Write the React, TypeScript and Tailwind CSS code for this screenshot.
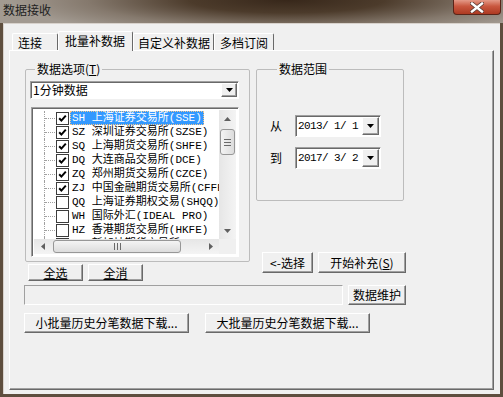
import React from "react";

const ui = "font-['Noto_Sans_CJK_SC',sans-serif] text-[12px] leading-[14px] text-black";
const raised =
  "bg-[#f0f0f0] border border-t-white border-l-white border-r-[#696969] border-b-[#696969] shadow-[inset_-1px_-1px_0_#a0a0a0]";
const sunken =
  "bg-white border border-t-[#a0a0a0] border-l-[#a0a0a0] border-r-white border-b-white shadow-[inset_1px_1px_0_#696969]";

const exchanges = [
  { code: "SH", name: "上海证券交易所(SSE)", on: true },
  { code: "SZ", name: "深圳证券交易所(SZSE)", on: true },
  { code: "SQ", name: "上海期货交易所(SHFE)", on: true },
  { code: "DQ", name: "大连商品交易所(DCE)", on: true },
  { code: "ZQ", name: "郑州期货交易所(CZCE)", on: true },
  { code: "ZJ", name: "中国金融期货交易所(CFFEX)", on: true },
  { code: "QQ", name: "上海证券期权交易(SHQQ)", on: false },
  { code: "WH", name: "国际外汇(IDEAL PRO)", on: false },
  { code: "HZ", name: "香港期货交易所(HKFE)", on: false },
  { code: "NQ", name: "新加坡期货交易所(SGX)", on: false },
];

const DropArrow = ({ fill = "#000" }: { fill?: string }) => (
  <svg width="7" height="4" viewBox="0 0 7 4">
    <path d="M0 0h7L3.5 4z" fill={fill} />
  </svg>
);

const Check = ({ on }: { on: boolean }) => (
  <div className="w-[13px] h-[13px] shrink-0 bg-white border border-[#3c3c3c] flex items-center justify-center">
    {on && (
      <svg width="9" height="9" viewBox="0 0 9 9">
        <polyline points="1.2,4.2 3.4,6.6 7.8,1.6" fill="none" stroke="#000" strokeWidth="2" />
      </svg>
    )}
  </div>
);

const Grip = ({ vertical }: { vertical: boolean }) =>
  vertical ? (
    <div className="flex flex-col gap-[2px]">
      <div className="w-[7px] h-px bg-[#6a6a6a]" />
      <div className="w-[7px] h-px bg-[#6a6a6a]" />
      <div className="w-[7px] h-px bg-[#6a6a6a]" />
    </div>
  ) : (
    <div className="flex gap-[2px]">
      <div className="w-px h-[7px] bg-[#6a6a6a]" />
      <div className="w-px h-[7px] bg-[#6a6a6a]" />
      <div className="w-px h-[7px] bg-[#6a6a6a]" />
    </div>
  );

const Legend = ({ children, ml }: { children: React.ReactNode; ml: string }) => (
  <legend className={`${ml} px-[2px] ${ui}`}>{children}</legend>
);

const DateBox = ({ value }: { value: string }) => (
  <div className={`${sunken} w-[86px] h-[22px] flex items-center justify-between pl-[2px] pr-[1px]`}>
    <span className="font-['Liberation_Mono',monospace] text-[11px] tracking-[-0.6px] whitespace-pre">
      {value}
    </span>
    <div className={`${raised} w-[17px] h-[18px] flex items-center justify-center`}>
      <DropArrow />
    </div>
  </div>
);

export default function App() {
  return (
    <div className={`w-[503px] h-[397px] flex flex-col bg-[#5e4e3e] overflow-hidden ${ui}`}>
      {/* title bar */}
      <div className="h-[23px] shrink-0 flex justify-between items-start bg-[radial-gradient(ellipse_55%_160%_at_57%_0%,#37271a_0%,#4c3b2b_35%,#85796d_72%,#a29a91_100%)]">
        <span className="pl-[3px] pt-[3px] text-[#1e1e1e]">数据接收</span>
        <div className="w-[48px] h-[15px] mr-[2px] rounded-b-[4px] border border-t-0 border-[#5a2418] bg-[linear-gradient(#e49a88,#c9573f_45%,#ad3a22)] flex items-center justify-center">
          <svg width="14" height="11" viewBox="0 0 14 11">
            <path d="M2 1.5L12 9.5M12 1.5L2 9.5" stroke="#5a3a34" strokeWidth="4" strokeLinecap="square" />
            <path d="M2 1.5L12 9.5M12 1.5L2 9.5" stroke="#fff" strokeWidth="2.4" strokeLinecap="square" />
          </svg>
        </div>
      </div>

      {/* client */}
      <div className="flex-1 mx-[3px] mb-[3px] bg-[#f0f0f0] flex flex-col border-l border-t border-[#d8d2cc]">
        {/* tabs */}
        <div className="flex items-end ml-[8px] mt-[7px]">
          <div className="w-[46px] h-[17px] border border-b-0 border-t-white border-l-white border-r-[#696969] rounded-t-[2px] pl-[5px] pt-[2px]">
            连接
          </div>
          <div className="relative z-10 -mb-px w-[75px] h-[20px] bg-[#f0f0f0] border border-b-0 border-t-white border-l-white border-r-[#696969] rounded-t-[2px] pl-[6px] pt-[2px]">
            批量补数据
          </div>
          <div className="w-[81px] h-[17px] border border-b-0 border-t-white border-l-white border-r-[#696969] rounded-t-[2px] pl-[4px] pt-[2px]">
            自定义补数据
          </div>
          <div className="w-[60px] h-[17px] border border-b-0 border-t-white border-l-white border-r-[#696969] rounded-t-[2px] pl-[5px] pt-[2px]">
            多档订阅
          </div>
        </div>

        {/* panel */}
        <div className="flex-1 ml-[5px] mr-[6px] mb-[4px] border border-t-white border-l-white border-r-[#696969] border-b-[#696969] shadow-[inset_-1px_-1px_0_#a0a0a0] pl-[15px] pt-[11px] flex flex-col">
          <div className="flex items-start">
            {/* left column */}
            <div className="w-[225px] flex flex-col">
              <fieldset className="h-[200px] border border-[#bcbcbc] rounded-[2px] pl-[4px]">
                <Legend ml="ml-[5px]">
                  数据选项(<span className="underline">T</span>)
                </Legend>
                <div className={`${sunken} mt-[5px] w-[209px] h-[18px] flex items-center justify-between pl-[2px] pr-[1px]`}>
                  <span>1分钟数据</span>
                  <div className={`${raised} w-[16px] h-[14px] flex items-center justify-center`}>
                    <DropArrow />
                  </div>
                </div>
                <div className={`${sunken} mt-[8px] ml-px w-[208px] h-[150px] p-[2px] flex flex-col`}>
                  <div className="flex h-[129px]">
                    <div className="flex-1 overflow-hidden pt-px font-['Liberation_Mono','Noto_Sans_CJK_SC',monospace] text-[11px]">
                      {exchanges.map((e, i) => (
                        <div key={e.code} className="h-[14px] flex items-center pl-[10px] whitespace-nowrap">
                          <div className="w-[11px] h-full border-l border-dotted border-[#a0a0a0] flex items-center shrink-0">
                            <div className="w-full border-t border-dotted border-[#a0a0a0]" />
                          </div>
                          <div className="ml-px">
                            <Check on={e.on} />
                          </div>
                          <div
                            className={
                              i === 0
                                ? "ml-px px-[1px] h-[14px] leading-[12px] bg-[#3399ff] text-white border border-dotted border-[#f5c58a]"
                                : "ml-[2px] px-[1px] leading-[14px]"
                            }
                          >
                            {e.code} {e.name}
                          </div>
                        </div>
                      ))}
                    </div>
                    {/* vertical scrollbar */}
                    <div className="w-[17px] flex flex-col bg-[linear-gradient(to_right,#e6e6e6,#f4f4f4)]">
                      <div className="h-[17px] flex items-center justify-center">
                        <svg width="7" height="4" viewBox="0 0 7 4">
                          <path d="M0 4h7L3.5 0z" fill="#606060" />
                        </svg>
                      </div>
                      <div className="mt-[2px] mx-[1px] h-[26px] rounded-[3px] border border-[#979797] bg-[linear-gradient(to_right,#f4f4f4,#dcdcdc)] flex items-center justify-center">
                        <Grip vertical />
                      </div>
                      <div className="flex-1" />
                      <div className="h-[17px] flex items-center justify-center">
                        <DropArrow fill="#606060" />
                      </div>
                    </div>
                  </div>
                  {/* horizontal scrollbar */}
                  <div className="h-[17px] flex">
                    <div className="flex-1 flex bg-[linear-gradient(#e6e6e6,#f4f4f4)]">
                      <div className="w-[17px] flex items-center justify-center">
                        <svg width="4" height="7" viewBox="0 0 4 7">
                          <path d="M4 0v7L0 3.5z" fill="#606060" />
                        </svg>
                      </div>
                      <div className="ml-[2px] my-[1px] w-[128px] rounded-[3px] border border-[#979797] bg-[linear-gradient(#f4f4f4,#dcdcdc)] flex items-center justify-center">
                        <Grip vertical={false} />
                      </div>
                      <div className="flex-1" />
                      <div className="w-[17px] flex items-center justify-center">
                        <svg width="4" height="7" viewBox="0 0 4 7">
                          <path d="M0 0v7L4 3.5z" fill="#606060" />
                        </svg>
                      </div>
                    </div>
                    <div className="w-[17px] bg-[#f0f0f0]" />
                  </div>
                </div>
              </fieldset>
              <div className="flex gap-[5px] mt-[2px] pl-[3px]">
                <div className={`${raised} w-[55px] h-[17px] flex items-center justify-center`}>
                  <span className="underline">全选</span>
                </div>
                <div className={`${raised} w-[55px] h-[17px] flex items-center justify-center`}>
                  <span className="underline">全消</span>
                </div>
              </div>
            </div>

            {/* right column */}
            <div className="ml-[6px] w-[150px] flex flex-col">
              <fieldset className="w-[148px] h-[139px] border border-[#bcbcbc] rounded-[2px] pl-[13px]">
                <Legend ml="ml-[7px]">数据范围</Legend>
                <div className="mt-[39px] flex items-center">
                  <span className="w-[12px]">从</span>
                  <div className="ml-[13px]">
                    <DateBox value="2013/ 1/ 1" />
                  </div>
                </div>
                <div className="mt-[10px] flex items-center">
                  <span className="w-[12px]">到</span>
                  <div className="ml-[13px]">
                    <DateBox value="2017/ 3/ 2" />
                  </div>
                </div>
              </fieldset>
              <div className="flex gap-[5px] mt-[51px] pl-[6px]">
                <div className={`${raised} w-[51px] h-[21px] flex items-center justify-center`}>
                  &lt;-选择
                </div>
                <div className={`${raised} w-[88px] h-[21px] flex items-center justify-center`}>
                  开始补充(<span className="underline">S</span>)
                </div>
              </div>
            </div>
          </div>

          <div className="flex gap-[5px] mt-[4px] -ml-px">
            <div className="w-[319px] h-[20px] border border-t-[#a0a0a0] border-l-[#a0a0a0] border-r-white border-b-white" />
            <div className={`${raised} w-[58px] h-[20px] flex items-center justify-center`}>数据维护</div>
          </div>

          <div className="flex gap-[16px] mt-[8px] -ml-px">
            <div className={`${raised} w-[165px] h-[20px] flex items-center justify-center`}>
              小批量历史分笔数据下载...
            </div>
            <div className={`${raised} w-[165px] h-[20px] flex items-center justify-center`}>
              大批量历史分笔数据下载...
            </div>
          </div>
        </div>
      </div>
    </div>
  );
}
